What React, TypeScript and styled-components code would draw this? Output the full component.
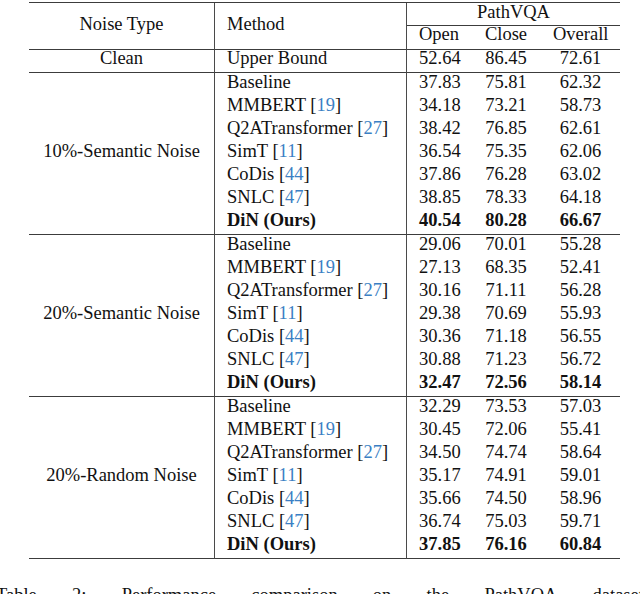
import styled, { createGlobalStyle } from 'styled-components';

const GlobalStyle = createGlobalStyle`
  html, body {
    margin: 0;
    padding: 0;
    background: #fff;
  }
  body {
    font-family: "Liberation Serif", "Times New Roman", serif;
    color: #111;
    overflow: hidden;
  }
`;

const Page = styled.div`
  width: 640px;
  height: 594px;
  padding-top: 2px;
  box-sizing: border-box;
  overflow: hidden;
`;

const Table = styled.table`
  margin-left: 29px;
  width: 591px;
  table-layout: fixed;
  border-collapse: separate;
  border-spacing: 0;
  border-top: 1px solid #3c3c3c;
  font-size: 18.5px;
`;

const Col = styled.col<{ $w: number }>`
  width: ${(p) => p.$w}px;
`;

const Row = styled.tr<{ $line?: number; $pad?: number }>`
  & > td {
    line-height: ${(p) => p.$line ?? 19}px;
    padding-bottom: ${(p) => p.$pad ?? 4}px;
  }
`;

const Cell = styled.td<{
  $left?: boolean;
  $rule?: boolean;
  $divider?: boolean;
  $bold?: boolean;
  $middle?: boolean;
}>`
  box-sizing: border-box;
  padding: 0 12px;
  white-space: nowrap;
  text-align: ${(p) => (p.$left ? 'left' : 'center')};
  vertical-align: ${(p) => (p.$middle ? 'middle' : 'top')};
  font-weight: ${(p) => (p.$bold ? 700 : 400)};
  border-bottom: ${(p) => (p.$rule ? '1px solid #3c3c3c' : 'none')};
  border-right: ${(p) => (p.$divider ? '1px solid #4a4a4a' : 'none')};
`;

const Ref = styled.span`
  color: #3b7fc4;
`;

const Caption = styled.p`
  margin: 27px -4px 0;
  font-size: 18.5px;
  line-height: 19px;
  text-align: justify;
  text-align-last: justify;
  white-space: nowrap;
  display: flex;
  justify-content: space-between;
`;

type Entry = { name: string; cite?: number; vals: [string, string, string]; ours?: boolean };

const groups: { label: string; rows: Entry[] }[] = [
  {
    label: '10%-Semantic Noise',
    rows: [
      { name: 'Baseline', vals: ['37.83', '75.81', '62.32'] },
      { name: 'MMBERT', cite: 19, vals: ['34.18', '73.21', '58.73'] },
      { name: 'Q2ATransformer', cite: 27, vals: ['38.42', '76.85', '62.61'] },
      { name: 'SimT', cite: 11, vals: ['36.54', '75.35', '62.06'] },
      { name: 'CoDis', cite: 44, vals: ['37.86', '76.28', '63.02'] },
      { name: 'SNLC', cite: 47, vals: ['38.85', '78.33', '64.18'] },
      { name: 'DiN (Ours)', vals: ['40.54', '80.28', '66.67'], ours: true },
    ],
  },
  {
    label: '20%-Semantic Noise',
    rows: [
      { name: 'Baseline', vals: ['29.06', '70.01', '55.28'] },
      { name: 'MMBERT', cite: 19, vals: ['27.13', '68.35', '52.41'] },
      { name: 'Q2ATransformer', cite: 27, vals: ['30.16', '71.11', '56.28'] },
      { name: 'SimT', cite: 11, vals: ['29.38', '70.69', '55.93'] },
      { name: 'CoDis', cite: 44, vals: ['30.36', '71.18', '56.55'] },
      { name: 'SNLC', cite: 47, vals: ['30.88', '71.23', '56.72'] },
      { name: 'DiN (Ours)', vals: ['32.47', '72.56', '58.14'], ours: true },
    ],
  },
  {
    label: '20%-Random Noise',
    rows: [
      { name: 'Baseline', vals: ['32.29', '73.53', '57.03'] },
      { name: 'MMBERT', cite: 19, vals: ['30.45', '72.06', '55.41'] },
      { name: 'Q2ATransformer', cite: 27, vals: ['34.50', '74.74', '58.64'] },
      { name: 'SimT', cite: 11, vals: ['35.17', '74.91', '59.01'] },
      { name: 'CoDis', cite: 44, vals: ['35.66', '74.50', '58.96'] },
      { name: 'SNLC', cite: 47, vals: ['36.74', '75.03', '59.71'] },
      { name: 'DiN (Ours)', vals: ['37.85', '76.16', '60.84'], ours: true },
    ],
  },
];

const App = () => {
  return (
    <Page>
      <GlobalStyle />
      <Table>
        <colgroup>
          <Col $w={186} />
          <Col $w={192} />
          <Col $w={64} />
          <Col $w={70} />
          <Col $w={79} />
        </colgroup>
        <tbody>
          <Row $pad={3}>
            <Cell rowSpan={2} $middle $rule $divider>
              Noise Type
            </Cell>
            <Cell rowSpan={2} $left $middle $rule $divider>
              Method
            </Cell>
            <Cell colSpan={3} $rule>
              PathVQA
            </Cell>
          </Row>
          <Row $line={17} $pad={6}>
            <Cell $rule>Open</Cell>
            <Cell $rule>Close</Cell>
            <Cell $rule>Overall</Cell>
          </Row>
          <Row $line={16} $pad={6}>
            <Cell $rule $divider>Clean</Cell>
            <Cell $left $rule $divider>Upper Bound</Cell>
            <Cell $rule>52.64</Cell>
            <Cell $rule>86.45</Cell>
            <Cell $rule>72.61</Cell>
          </Row>
          {groups.map((g) =>
            g.rows.map((r, i) => {
              const last = i === g.rows.length - 1;
              return (
                <Row key={g.label + r.name}>
                  {i === 0 && (
                    <Cell rowSpan={g.rows.length} $middle $rule $divider>
                      {g.label}
                    </Cell>
                  )}
                  <Cell $left $divider $rule={last} $bold={r.ours}>
                    {r.name}
                    {r.cite !== undefined && (
                      <>
                        {' '}[<Ref>{r.cite}</Ref>]
                      </>
                    )}
                  </Cell>
                  {r.vals.map((v, j) => (
                    <Cell key={j} $rule={last} $bold={r.ours}>
                      {v}
                    </Cell>
                  ))}
                </Row>
              );
            })
          )}
        </tbody>
      </Table>
      <Caption>
        <span>Table</span>
        <span>2:</span>
        <span>Performance</span>
        <span>comparison</span>
        <span>on</span>
        <span>the</span>
        <span>PathVQA</span>
        <span>dataset</span>
      </Caption>
    </Page>
  );
};

export default App;
